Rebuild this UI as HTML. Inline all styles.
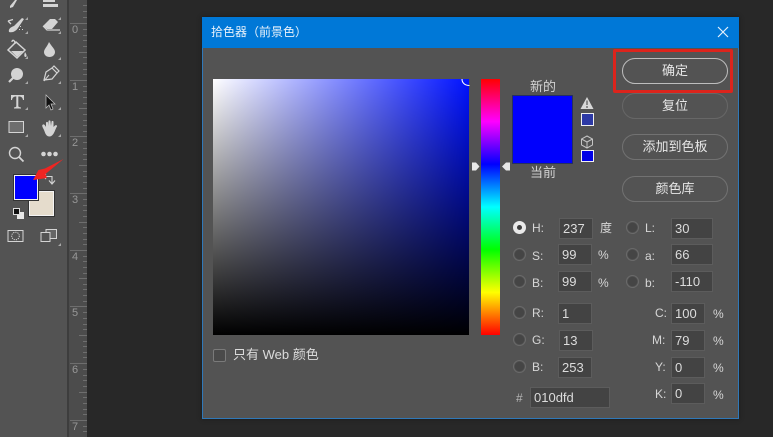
<!DOCTYPE html>
<html lang="zh"><head><meta charset="utf-8"><title>拾色器</title>
<style>
html,body{margin:0;padding:0;background:#282828}
#p{position:relative;width:773px;height:437px;overflow:hidden;background:#282828;font-family:"Liberation Sans","Noto Sans CJK SC",sans-serif;color:#d6d6d6;font-size:12px;filter:blur(.3px)}
#p div,#p span{position:absolute;box-sizing:border-box}
svg{position:absolute;left:0;top:0}
.t{white-space:nowrap;line-height:16px}
.c{font-size:13px}
.f{background:#434343;border:1px solid #5c5c5c;height:21px;padding:2px 0 0 3px;line-height:16px;color:#dcdcdc;font-size:13px}
.r{width:13px;height:13px;border-radius:50%;border:1px solid #6a6a6a;background:radial-gradient(circle,#454545 0,#454545 4.500px,#535353 5px)}
.b{left:622px;width:106px;height:26px;border-radius:13px;border:1px solid #767676;text-align:center;line-height:24px;color:#e6e6e6;font-size:13px}
.n{left:72px;color:#979797;font-size:11px;line-height:12px}
</style></head><body><div id="p">

<div style="left:0;top:0;width:67px;height:437px;background:#535353"></div>
<div style="left:67px;top:0;width:2px;height:437px;background:#3d3d3d"></div>
<div style="left:69px;top:0;width:18px;height:437px;background:#4c4c4c"></div>

<svg width="773" height="437" viewBox="0 0 773 437" fill="none">
<!-- ruler ticks -->
<g stroke="#6e6e6e" stroke-width="1">
<path d="M70 23.500H87M70 80.500H87M70 136.500H87M70 193.500H87M70 250.500H87M70 306.500H87M70 363.500H87M70 420.500H87"/>
<path d="M83 5.500H87M83 11.500H87M83 17.500H87M83 29.500H87M83 35.500H87M83 40.500H87M83 46.500H87M83 57.500H87M83 63.500H87M83 69.500H87M83 74.500H87M83 86.500H87M83 91.500H87M83 97.500H87M83 103.500H87M83 114.500H87M83 120.500H87M83 125.500H87M83 131.500H87M83 142.500H87M83 148.500H87M83 154.500H87M83 159.500H87M83 171.500H87M83 176.500H87M83 182.500H87M83 188.500H87M83 199.500H87M83 205.500H87M83 210.500H87M83 216.500H87M83 227.500H87M83 233.500H87M83 239.500H87M83 244.500H87M83 256.500H87M83 261.500H87M83 267.500H87M83 273.500H87M83 284.500H87M83 289.500H87M83 295.500H87M83 301.500H87M83 312.500H87M83 318.500H87M83 324.500H87M83 329.500H87M83 341.500H87M83 346.500H87M83 352.500H87M83 357.500H87M83 369.500H87M83 375.500H87M83 380.500H87M83 386.500H87M83 397.500H87M83 403.500H87M83 409.500H87M83 414.500H87M83 426.500H87M83 431.500H87"/>
<path d="M79 52.500H87M79 108.500H87M79 165.500H87M79 222.500H87M79 278.500H87M79 335.500H87M79 392.500H87"/>
</g>

<!-- tools -->
<g fill="#d4d4d4" stroke="#d4d4d4">
<path d="M10 6 15 0H17L13 7 10 8Z" stroke="none"/>
<path d="M43 0H55V2H43ZM43 4H58V7H43Z" stroke="none"/>
<path d="M9 32C8 29 11 27 14 26L22 18 24 19 18 28C16 31 13 33 9 32Z" stroke="none"/>
<path d="M8 21 13 19.500M8 21 11 24" stroke-width="1.300" fill="none"/>
<path d="M20 26h1v1h-1zM19 29h1v1h-1zM22 29h1v1h-1z" stroke="none"/>
<path d="M43 26 50 19H55L58 22 52 29H47Z" stroke="none"/>
<path d="M43 26 47 30H60" fill="none" stroke-width="1.200"/>
<path d="M8 50 16 42 25 50 17 58Z" fill="none" stroke-width="1.500"/>
<path d="M12 42C12 39 15 40 15 44" fill="none" stroke-width="1.300"/>
<path d="M11 51H23L17 57Z" stroke="none"/>
<path d="M25 52C27 55 27 57 25.500 57 24 57 24 55 25 52Z" stroke="none"/>
<path d="M49 42C52 47 55 49 55 52 55 55 52.500 57 49.500 57 46.500 57 44 55 44 52 44 49 47 47 49 42Z" stroke="none"/>
<circle cx="17" cy="74" r="6" stroke="none"/>
<path d="M13 78 9 82" stroke-width="2.200" fill="none"/>
<path d="M44 80 46 72 52 68 57 73 52 79Z" fill="none" stroke-width="1.200"/>
<path d="M52 68 54 66 59 71 57 73" fill="none" stroke-width="1.200"/>
<path d="M44 81 49 75" fill="none" stroke-width="1"/>
<path d="M11 96V95H24V100H23C22.500 97.500 21.500 96.500 19 96.500H18.300V106C18.300 107 19.500 107 21 107.500V108.500H14V107.500C15.500 107 16.300 107 16.300 106V96.500H16C13.500 96.500 12.500 97.500 12 100H11Z" stroke="none"/>
<path d="M46 95 46 108 49 105 51 110 53 109 51 104 55 104Z" fill="#111" stroke="#c5c5c5" stroke-width=".700"/>
<path d="M9 121.500H23.500V132.500H9Z" fill="#6e6e6e" stroke-width="1"/>
<path d="M43 128C42 126 42 125 43 124.500 44 124 45 125 46 127L46 123C46 121.500 48 121.500 48 123V126L48.500 121.500C48.500 120 50.500 120 50.500 121.500L51 126 51.500 122C51.500 120.500 53.500 120.500 53.500 122L53.500 127 55 125.500C56 124.500 57.500 125.500 57 126.500 55 129 54 137 49 136.500 45 136 45 131 43 128Z" stroke="none"/>
<circle cx="15" cy="153" r="5.500" fill="none" stroke-width="1.400"/>
<path d="M19 157 23.500 161.500" stroke-width="1.800" fill="none"/>
<circle cx="43.500" cy="154" r="2.300" stroke="none"/><circle cx="49.500" cy="154" r="2.300" stroke="none"/><circle cx="55.500" cy="154" r="2.300" stroke="none"/>
<path d="M46 176.500H52V183M49 180.500 52 184 55 180.500M46 174 43.500 176.500 46 179" fill="none" stroke-width="1.100"/>
<path d="M8 230.500H23V241.500H8Z" fill="none" stroke-width="1"/>
<circle cx="15.500" cy="236" r="3.800" fill="none" stroke-width="1" stroke-dasharray="1.200 1"/>
<path d="M41 232.500H50V241.500H41Z" fill="none" stroke-width="1"/>
<path d="M46 232.500V229.500H56.500V238.500H50V232.500Z" fill="#666" stroke-width="1"/>
</g>
<g fill="#a8a8a8">
<path d="M28 17l-3 3h3zM61 17l-3 3h3zM28 31l-3 3h3zM61 31l-3 3h3zM28 56l-3 3h3zM61 57l-3 3h3zM28 81l-3 3h3zM61 81l-3 3h3zM28 107l-3 3h3zM61 107l-3 3h3zM28 134l-3 3h3zM61 134l-3 3h3zM61 243l-3 3h3z"/>
</g>
</svg>

<!-- ruler numbers -->
<span class="n" style="top:24px">0</span><span class="n" style="top:81px">1</span><span class="n" style="top:137px">2</span><span class="n" style="top:194px">3</span><span class="n" style="top:251px">4</span><span class="n" style="top:307px">5</span><span class="n" style="top:364px">6</span><span class="n" style="top:421px">7</span>

<!-- fg/bg swatches -->
<div style="left:29px;top:191px;width:25px;height:25px;background:#e5dccc;border:1px solid #f4f4f4;outline:1px solid #333"></div>
<div style="left:14px;top:175px;width:24px;height:25px;background:#0000fe;border:1px solid #f2f2f2;outline:1px solid #333"></div>
<div style="left:17px;top:212px;width:7px;height:7px;background:#e8e8e8"></div>
<div style="left:13px;top:208px;width:7px;height:7px;background:#111;border:1px solid #ddd"></div>

<!-- dialog -->
<div style="left:202px;top:17px;width:537px;height:402px;background:#535353;border:1px solid #2f78b8;box-shadow:0 0 4px #1a1a1a"></div>
<div style="left:202px;top:17px;width:537px;height:31px;background:#0078d7"></div>
<span class="t" style="left:211px;top:24px;color:#e8f2fb;font-size:12px">拾色器（前景色）</span>
<svg width="773" height="437" fill="none"><path d="M718 27 728 37M728 27 718 37" stroke="#e4f1fb" stroke-width="1.200"/>
<path d="M587 97 593.500 109H580.500Z" fill="#d8d8d8"/>
<path d="M587 100.500V105M587 106V108" stroke="#4a4a4a" stroke-width="1.100"/>
<path d="M587 136 592.500 139V145L587 148 581.500 145V139ZM581.500 139 587 142 592.500 139M587 142V148" stroke="#c5c5c5" stroke-width="1"/>
</svg>

<!-- color field -->
<div style="left:213px;top:79px;width:256px;height:256px;background:linear-gradient(to bottom,rgba(0,0,0,0),#000),linear-gradient(to right,#fff,#0012ff)"></div>
<svg width="773" height="437" fill="none"><path d="M462 79C462 83 465 85.500 469.500 85.500" stroke="#fff" stroke-width="1.100"/></svg>
<div style="left:481px;top:79px;width:19px;height:256px;background:linear-gradient(to bottom,#f00 0%,#f0f 16.600%,#00f 33.300%,#0ff 50%,#0f0 66.600%,#ff0 83.300%,#f00 100%)"></div>
<svg width="773" height="437"><path d="M472 162.500H476L479.500 166.500 476 170.500H472Z" fill="#e8e8e8"/><path d="M510 162.500H506L502 166.500 506 170.500H510Z" fill="#e8e8e8"/></svg>

<!-- swatches -->
<span class="t c" style="left:530px;top:79px;color:#d2d2d2">新的</span>
<div style="left:512px;top:95px;width:61px;height:69px;background:#0000fd;border:1px solid #26305f"></div>
<span class="t c" style="left:530px;top:165px;color:#d2d2d2">当前</span>
<div style="left:581px;top:113px;width:13px;height:13px;background:#2d39a5;border:1px solid #f0f0f0"></div>
<div style="left:581px;top:150px;width:13px;height:12px;background:#0000e6;border:1px solid #f0f0f0"></div>

<!-- buttons -->
<div class="b" style="top:58px;border:1.500px solid #bdbdbd">确定</div>
<div class="b" style="top:93px;border-color:#676767">复位</div>
<div class="b" style="top:134px;border-color:#727272">添加到色板</div>
<div class="b" style="top:176px;border-color:#727272">颜色库</div>
<div style="left:613px;top:49px;width:120px;height:44px;border:3px solid #dc241c;border-radius:2px"></div>

<!-- radios -->
<div class="r" style="left:513px;top:221px;border:none;background:#e9e9e9"></div>
<div style="left:517px;top:225px;width:5px;height:5px;border-radius:50%;background:#3d3d3d"></div>
<div class="r" style="left:513px;top:248px"></div>
<div class="r" style="left:513px;top:275px"></div>
<div class="r" style="left:513px;top:306px"></div>
<div class="r" style="left:513px;top:333px"></div>
<div class="r" style="left:513px;top:360px"></div>
<div class="r" style="left:626px;top:221px"></div>
<div class="r" style="left:626px;top:248px"></div>
<div class="r" style="left:626px;top:275px"></div>

<!-- labels -->
<span class="t" style="left:532px;top:220px">H:</span>
<span class="t" style="left:532px;top:248px">S:</span>
<span class="t" style="left:532px;top:275px">B:</span>
<span class="t" style="left:532px;top:305px">R:</span>
<span class="t" style="left:532px;top:332px">G:</span>
<span class="t" style="left:532px;top:359px">B:</span>
<span class="t" style="left:645px;top:220px">L:</span>
<span class="t" style="left:645px;top:248px">a:</span>
<span class="t" style="left:645px;top:275px">b:</span>
<span class="t" style="left:655px;top:305px">C:</span>
<span class="t" style="left:652px;top:332px">M:</span>
<span class="t" style="left:655px;top:359px">Y:</span>
<span class="t" style="left:655px;top:386px">K:</span>
<span class="t" style="left:516px;top:390px;color:#b8b8b8">#</span>
<span class="t" style="left:600px;top:220px">度</span>
<span class="t" style="left:598px;top:247px">%</span>
<span class="t" style="left:598px;top:275px">%</span>
<span class="t" style="left:713px;top:306px">%</span>
<span class="t" style="left:713px;top:333px">%</span>
<span class="t" style="left:713px;top:360px">%</span>
<span class="t" style="left:713px;top:387px">%</span>

<!-- fields -->
<div class="f" style="left:559px;top:218px;width:34px">237</div>
<div class="f" style="left:558px;top:244px;width:34px">99</div>
<div class="f" style="left:558px;top:271px;width:34px">99</div>
<div class="f" style="left:558px;top:303px;width:34px">1</div>
<div class="f" style="left:559px;top:330px;width:34px">13</div>
<div class="f" style="left:558px;top:357px;width:34px">253</div>
<div class="f" style="left:530px;top:387px;width:80px">010dfd</div>
<div class="f" style="left:671px;top:218px;width:42px">30</div>
<div class="f" style="left:671px;top:244px;width:42px">66</div>
<div class="f" style="left:671px;top:271px;width:42px">-110</div>
<div class="f" style="left:671px;top:303px;width:34px">100</div>
<div class="f" style="left:671px;top:330px;width:34px">79</div>
<div class="f" style="left:671px;top:357px;width:34px">0</div>
<div class="f" style="left:671px;top:383px;width:34px">0</div>

<!-- web only -->
<div style="left:213px;top:349px;width:13px;height:13px;border:1px solid #7a7a7a;border-radius:2px;background:#4a4a4a"></div>
<span class="t c" style="left:233px;top:347px;color:#dcdcdc">只有 Web 颜色</span>

<!-- red arrow -->
<svg width="773" height="437"><path d="M63.500 159 L45 168.500 38.500 170 33 180 47 178 45.500 174 Z" fill="#ee2522"/></svg>
</div></body></html>
